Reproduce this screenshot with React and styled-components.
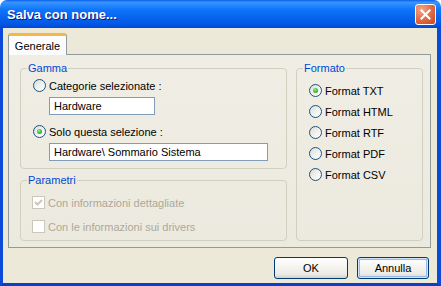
import React from 'react'
import styled, { createGlobalStyle, css } from 'styled-components'

const GlobalStyle = createGlobalStyle`
    body {
        margin: 0;
        background: #ffffff;
        font-family: 'Liberation Sans', Arial, sans-serif;
    }
`

const Window = styled.div`
    width: 441px;
    height: 286px;
    display: flex;
    flex-direction: column;
    box-sizing: border-box;
`

const TitleBar = styled.div`
    height: 28px;
    flex: none;
    display: flex;
    align-items: center;
    justify-content: space-between;
    padding: 0 5px 0 7px;
    border-radius: 7px 7px 0 0;
    background: linear-gradient(
        180deg,
        #0a5fe8 0%,
        #3d95ff 8%,
        #2a8bff 16%,
        #0f74fb 35%,
        #0865f0 60%,
        #0358e6 85%,
        #0148cf 100%
    );
`

const Title = styled.span`
    color: #ffffff;
    font-weight: bold;
    font-size: 13px;
    text-shadow: 1px 1px #0a1a83;
`

const CloseButton = styled.button`
    width: 21px;
    height: 21px;
    padding: 0;
    display: flex;
    align-items: center;
    justify-content: center;
    border: 1px solid #ffffff;
    border-radius: 3px;
    background: radial-gradient(circle at 30% 25%, #f2a78a 0%, #e5714a 45%, #c9441c 100%);
`

const Body = styled.div`
    flex: 1;
    display: flex;
    flex-direction: column;
    background: #ece9d8;
    border-left: 3px solid #0c4bd9;
    border-right: 4px solid #0c4bd9;
    border-bottom: 3px solid #0a3fc8;
    padding: 5px 6px 4px 5px;
    font-size: 11px;
`

const TabStrip = styled.div`
    display: flex;
    height: 21px;
    flex: none;
`

const Tab = styled.div`
    width: 59px;
    box-sizing: border-box;
    display: flex;
    align-items: center;
    justify-content: center;
    color: #000;
    border: 1px solid #919b9c;
    border-bottom: none;
    border-top: 3px solid #f5b843;
    border-radius: 3px 3px 0 0;
    background: #fcfcfe;
    margin-bottom: -1px;
    position: relative;
    z-index: 1;
    padding-top: 1px;
`

const Panel = styled.div`
    flex: 1;
    border: 1px solid #919b9c;
    background: linear-gradient(180deg, #f0eee4 0%, #eceadf 100%);
    padding: 7px 8px 6px 11px;
    display: grid;
    grid-template-columns: 267px 127px;
    column-gap: 9px;
`

const Column = styled.div`
    display: flex;
    flex-direction: column;
    gap: 5px;
`

const Group = styled.fieldset`
    margin: 0;
    padding: 0;
    border: 1px solid #d0d0bf;
    border-radius: 4px;
    min-width: 0;
    display: flex;
    flex-direction: column;
    ${p => p.$grow && css`flex: 1;`}
`

const Legend = styled.legend`
    margin-left: 6px;
    padding: 0 1px;
    color: #0046d5;
    line-height: 13px;
`

const GroupBody = styled.div`
    display: flex;
    flex-direction: column;
    padding: ${p => p.$pad};
`

const Row = styled.label`
    display: flex;
    align-items: center;
    height: 13px;
    gap: 3px;
    color: ${p => (p.$disabled ? '#aca899' : '#000')};
    margin-top: ${p => p.$mt || 0}px;
`

const Radio = styled.span`
    width: 13px;
    height: 13px;
    box-sizing: border-box;
    border-radius: 50%;
    border: 1px solid #1c5180;
    background: linear-gradient(135deg, #dcdcd7 0%, #f2f2ee 55%, #ffffff 100%);
    flex: none;
    display: flex;
    align-items: center;
    justify-content: center;

    &::after {
        content: '';
        display: ${p => (p.$checked ? 'block' : 'none')};
        width: 5px;
        height: 5px;
        border-radius: 50%;
        background: radial-gradient(circle at 40% 35%, #9ae89a 0%, #3ac03a 50%, #1d8f1d 100%);
    }
`

const Check = styled.span`
    width: 13px;
    height: 13px;
    box-sizing: border-box;
    border: 1px solid #cac8bb;
    background: #ffffff;
    flex: none;
    display: flex;
    align-items: center;
    justify-content: center;
`

const TextBox = styled.div`
    width: ${p => p.$w}px;
    height: 18px;
    box-sizing: border-box;
    border: 1px solid #7f9db9;
    background: #ffffff;
    display: flex;
    align-items: center;
    padding-left: 4px;
    margin: 5px 0 0 16px;
    color: #000;
    white-space: nowrap;
`

const ButtonRow = styled.div`
    display: flex;
    justify-content: flex-end;
    gap: 9px;
    margin-top: 9px;
    padding-right: 2px;
`

const Button = styled.button`
    width: ${p => p.$w}px;
    height: 22px;
    font-family: inherit;
    font-size: 11px;
    font-weight: normal;
    color: #000;
    border: 1px solid #003c74;
    border-radius: 3px;
    background: linear-gradient(180deg, #ffffff 0%, #f5f4ef 45%, #ecebe6 80%, #d6d0c5 100%);
    ${p =>
        p.$default &&
        css`
            box-shadow: inset 0 0 0 1px #cee7ff, inset 0 0 0 2px #98b8ea;
        `}
`

const CloseIcon = () => (
    <svg width="11" height="11" viewBox="0 0 11 11">
        <path d="M1.5 1.5 L9.5 9.5 M9.5 1.5 L1.5 9.5" stroke="#ffffff" strokeWidth="2" strokeLinecap="square" />
    </svg>
)

const CheckMark = () => (
    <svg width="9" height="9" viewBox="0 0 9 9">
        <path d="M1 4 L3.5 6.5 L8 2" stroke="#cac8bb" strokeWidth="2" fill="none" />
    </svg>
)

const formats = ['Format TXT', 'Format HTML', 'Format RTF', 'Format PDF', 'Format CSV']

const App = () => (
    <>
        <GlobalStyle />
        <Window>
            <TitleBar>
                <Title>Salva con nome...</Title>
                <CloseButton>
                    <CloseIcon />
                </CloseButton>
            </TitleBar>
            <Body>
                <TabStrip>
                    <Tab>Generale</Tab>
                </TabStrip>
                <Panel>
                    <Column>
                        <Group>
                            <Legend>Gamma</Legend>
                            <GroupBody $pad="4px 0 7px 12px">
                                <Row>
                                    <Radio />
                                    Categorie selezionate :
                                </Row>
                                <TextBox $w={106}>Hardware</TextBox>
                                <Row $mt={10}>
                                    <Radio $checked />
                                    Solo questa selezione :
                                </Row>
                                <TextBox $w={219}>Hardware\ Sommario Sistema</TextBox>
                            </GroupBody>
                        </Group>
                        <Group $grow>
                            <Legend>Parametri</Legend>
                            <GroupBody $pad="9px 0 7px 11px">
                                <Row $disabled>
                                    <Check>
                                        <CheckMark />
                                    </Check>
                                    Con informazioni dettagliate
                                </Row>
                                <Row $disabled $mt={11}>
                                    <Check />
                                    Con le informazioni sui drivers
                                </Row>
                            </GroupBody>
                        </Group>
                    </Column>
                    <Group>
                        <Legend>Formato</Legend>
                        <GroupBody $pad="9px 0 7px 12px">
                            {formats.map((f, i) => (
                                <Row key={f} $mt={i ? 8 : 0}>
                                    <Radio $checked={i === 0} />
                                    {f}
                                </Row>
                            ))}
                        </GroupBody>
                    </Group>
                </Panel>
                <ButtonRow>
                    <Button $w={74}>OK</Button>
                    <Button $w={72} $default>
                        Annulla
                    </Button>
                </ButtonRow>
            </Body>
        </Window>
    </>
)

export default App
